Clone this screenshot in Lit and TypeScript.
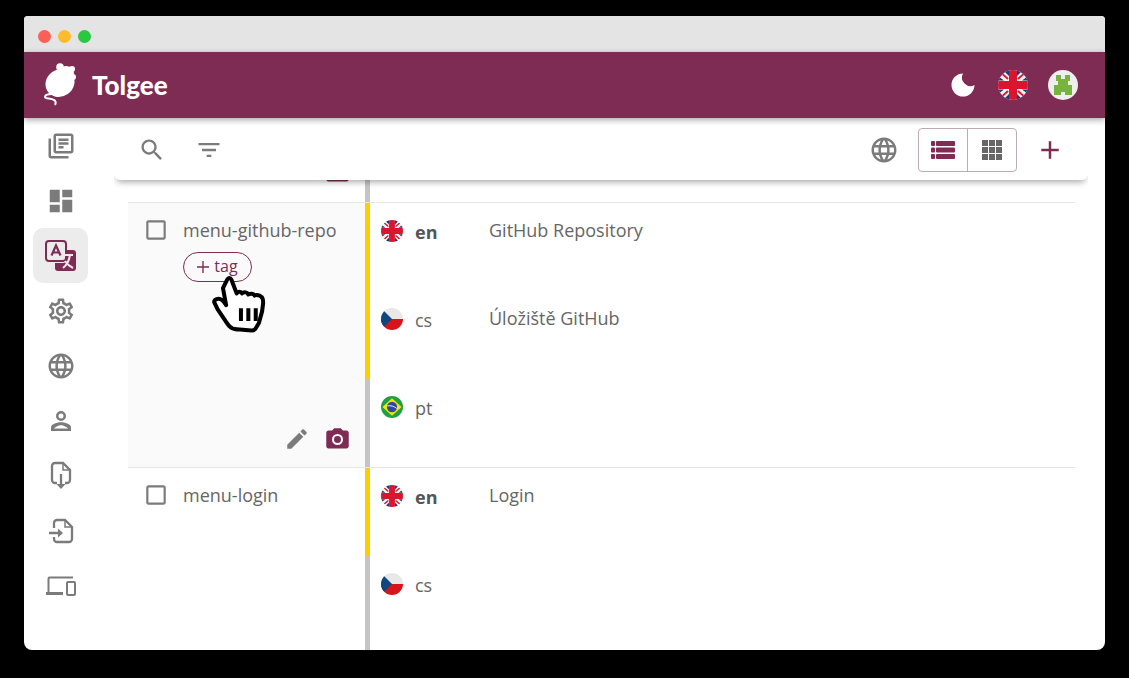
import { LitElement, html, css, svg } from "lit";
import { customElement } from "lit/decorators.js";

const P = {
  library:
    "M4 6H2v14c0 1.1.9 2 2 2h14v-2H4V6zm16-4H8c-1.1 0-2 .9-2 2v12c0 1.1.9 2 2 2h12c1.1 0 2-.9 2-2V4c0-1.1-.9-2-2-2zm0 14H8V4h12v12zM10 9h8v2h-8zm0 3h4v2h-4zm0-6h8v2h-8z",
  dashboard: "M3 13h8V3H3v10zm0 8h8v-6H3v6zm10 0h8V11h-8v10zm0-18v6h8V3h-8z",
  settings:
    "M19.43 12.98c.04-.32.07-.64.07-.98 0-.34-.03-.66-.07-.98l2.11-1.65c.19-.15.24-.42.12-.64l-2-3.46c-.09-.16-.26-.25-.44-.25-.06 0-.12.01-.17.03l-2.49 1c-.52-.4-1.08-.73-1.69-.98l-.38-2.65C14.46 2.18 14.25 2 14 2h-4c-.25 0-.46.18-.49.42l-.38 2.65c-.61.25-1.17.59-1.69.98l-2.49-1c-.06-.02-.12-.03-.18-.03-.17 0-.34.09-.43.25l-2 3.46c-.13.22-.07.49.12.64l2.11 1.65c-.04.32-.07.65-.07.98 0 .33.03.66.07.98l-2.11 1.65c-.19.15-.24.42-.12.64l2 3.46c.09.16.26.25.44.25.06 0 .12-.01.17-.03l2.49-1c.52.4 1.08.73 1.69.98l.38 2.65c.03.24.24.42.49.42h4c.25 0 .46-.18.49-.42l.38-2.65c.61-.25 1.17-.59 1.69-.98l2.49 1c.06.02.12.03.18.03.17 0 .34-.09.43-.25l2-3.46c.12-.22.07-.49-.12-.64l-2.11-1.65zm-1.98-1.71c.04.31.05.52.05.73 0 .21-.02.43-.05.73l-.14 1.13.89.7 1.08.84-.7 1.21-1.27-.51-1.04-.42-.9.68c-.43.32-.84.56-1.25.73l-1.06.43-.16 1.13-.2 1.35h-1.4l-.19-1.35-.16-1.13-1.06-.43c-.43-.18-.83-.41-1.23-.71l-.91-.7-1.06.43-1.27.51-.7-1.21 1.08-.84.89-.7-.14-1.13c-.03-.31-.05-.54-.05-.74s.02-.43.05-.73l.14-1.13-.89-.7-1.08-.84.7-1.21 1.27.51 1.04.42.9-.68c.43-.32.84-.56 1.25-.73l1.06-.43.16-1.13.2-1.35h1.39l.19 1.35.16 1.13 1.06.43c.43.18.83.41 1.23.71l.91.7 1.06-.43 1.27-.51.7 1.21-1.07.85-.89.7.14 1.13zM12 8c-2.21 0-4 1.79-4 4s1.79 4 4 4 4-1.79 4-4-1.79-4-4-4zm0 6c-1.1 0-2-.9-2-2s.9-2 2-2 2 .9 2 2-.9 2-2 2z",
  globe:
    "M11.99 2C6.47 2 2 6.48 2 12s4.47 10 9.99 10C17.52 22 22 17.52 22 12S17.52 2 11.99 2zm6.93 6h-2.95c-.32-1.25-.78-2.45-1.38-3.56 1.84.63 3.37 1.91 4.33 3.56zM12 4.04c.83 1.2 1.48 2.53 1.91 3.96h-3.82c.43-1.43 1.08-2.76 1.91-3.96zM4.26 14C4.1 13.36 4 12.69 4 12s.1-1.36.26-2h3.38c-.08.66-.14 1.32-.14 2 0 .68.06 1.34.14 2H4.26zm.82 2h2.95c.32 1.25.78 2.45 1.38 3.56-1.84-.63-3.37-1.9-4.33-3.56zm2.95-8H5.08c.96-1.66 2.49-2.93 4.33-3.56C8.81 5.55 8.35 6.75 8.03 8zM12 19.96c-.83-1.2-1.48-2.53-1.91-3.96h3.82c-.43 1.43-1.08 2.76-1.91 3.96zM14.34 14H9.66c-.09-.66-.16-1.32-.16-2 0-.68.07-1.35.16-2h4.68c.09.65.16 1.32.16 2 0 .68-.07 1.34-.16 2zm.25 5.56c.6-1.11 1.06-2.31 1.38-3.56h2.95c-.96 1.65-2.49 2.93-4.33 3.56zM16.36 14c.08-.66.14-1.32.14-2 0-.68-.06-1.34-.14-2h3.38c.16.64.26 1.31.26 2s-.1 1.36-.26 2h-3.38z",
  search:
    "M15.5 14h-.79l-.28-.27C15.41 12.59 16 11.11 16 9.5 16 5.91 13.09 3 9.5 3S3 5.91 3 9.5 5.91 16 9.5 16c1.61 0 3.09-.59 4.23-1.57l.27.28v.79l5 4.99L20.49 19l-4.99-5zm-6 0C7.01 14 5 11.99 5 9.5S7.01 5 9.5 5 14 7.01 14 9.5 11.99 14 9.5 14z",
  filter: "M10 18h4v-2h-4v2zM3 6v2h18V6H3zm3 7h12v-2H6v2z",
  plus: "M19 13h-6v6h-2v-6H5v-2h6V5h2v6h6v2z",
  edit: "M3 17.25V21h3.75L17.81 9.94l-3.75-3.75L3 17.25zM20.71 7.04c.39-.39.39-1.02 0-1.41l-2.34-2.34c-.39-.39-1.02-.39-1.41 0l-1.83 1.83 3.75 3.75 1.83-1.83z",
  check:
    "M19 5v14H5V5h14m0-2H5c-1.1 0-2 .9-2 2v14c0 1.1.9 2 2 2h14c1.1 0 2-.9 2-2V5c0-1.1-.9-2-2-2z",
  camera:
    "M9 2L7.17 4H4c-1.1 0-2 .9-2 2v12c0 1.1.9 2 2 2h16c1.1 0 2-.9 2-2V6c0-1.1-.9-2-2-2h-3.17L15 2H9z",
};

const GREY = "#7b7b7b";
const MAROON = "#7f2c54";

const icon = (d: string, size = 30, color = GREY) => html`<svg
  width=${size}
  height=${size}
  viewBox="0 0 24 24"
  fill=${color}
>
  <path d=${d}></path>
</svg>`;

const translateIcon = html`<svg width="34" height="34" viewBox="0 0 34 34">
  <rect x="2" y="2" width="20" height="20" rx="3" fill="#ececec" stroke=${MAROON} stroke-width="2"></rect>
  <path d="M7.5 16.5 12 6.5l4.5 10M9 13.5h6" fill="none" stroke=${MAROON} stroke-width="2.200"></path>
  <path d="M22 11h7a3 3 0 0 1 3 3v15a3 3 0 0 1-3 3H14a3 3 0 0 1-3-3v-5h8a3 3 0 0 0 3-3z" fill=${MAROON}></path>
  <path d="M19 16h10M26 16c-1 6-3 10-7 13M21 22c2 3 4 5 8 7" fill="none" stroke="#f1e6ec" stroke-width="2"></path>
</svg>`;

const personIcon = html`<svg width="30" height="30" viewBox="0 0 24 24" fill=${GREY}>
  <circle cx="12" cy="8" r="3" fill="none" stroke=${GREY} stroke-width="2"></circle>
  <path d="M4 20v-3c0-2.660 5.330-4 8-4s8 1.340 8 4v3z"></path>
  <path d="M6.300 18h11.400c-.8-1.200-3.600-2.700-5.700-2.700S7.100 16.800 6.300 18z" fill="#fff"></path>
</svg>`;

const importIcon = html`<svg width="30" height="34" viewBox="0 0 30 34" fill="none" stroke=${GREY} stroke-width="2.300">
  <path d="M11 24H9a3 3 0 0 1-3-3V7a3 3 0 0 1 3-3h8l7 7v10a3 3 0 0 1-3 3h-2"></path>
  <path d="M17 4v7h7" stroke-width="1.500"></path>
  <path d="M15 15v11"></path>
  <path d="M10.500 25h9L15 30z" fill=${GREY} stroke="none"></path>
</svg>`;

const exportIcon = html`<svg width="30" height="34" viewBox="0 0 30 34" fill="none" stroke=${GREY} stroke-width="2.300">
  <path d="M8 14V9a3 3 0 0 1 3-3h8l7 7v12a3 3 0 0 1-3 3H11a3 3 0 0 1-3-3v-2"></path>
  <path d="M19 6v7h7" stroke-width="1.500"></path>
  <path d="M3 19h10"></path>
  <path d="M12 14.500v9l5-4.500z" fill=${GREY} stroke="none"></path>
</svg>`;

const devicesIcon = html`<svg width="30" height="20" viewBox="0 0 30 20" fill="none">
  <path d="M2.5 16V2.500a1 1 0 0 1 1-1H27" stroke=${GREY} stroke-width="2"></path>
  <path d="M0 16h17v3H0z" fill=${GREY}></path>
  <rect x="21" y="6" width="8" height="13" rx="1" stroke=${GREY} stroke-width="2"></rect>
</svg>`;

const ukFlag = (size: number) => html`<svg width=${size} height=${size} viewBox="0 0 30 30">
  <defs>
    <clipPath id="uk"><circle cx="15" cy="15" r="15"></circle></clipPath>
  </defs>
  <g clip-path="url(#uk)">
    <rect width="30" height="30" fill="#f2f2f2"></rect>
    <path d="M5 0h6v6zM25 0h-6v6zM5 30h6v-6zM25 30h-6v-6zM0 6l6 4.500H0zM30 6l-6 4.500h6zM0 24l6-4.500H0zM30 24l-6-4.500h6z" fill="#1f3a7a"></path>
    <path d="M0 0l10 9M30 0L20 9M0 30l10-9M30 30L20 21" stroke="#d8172f" stroke-width="1.800"></path>
    <path d="M11 0h8v11h11v8H19v11h-8V19H0v-8h11z" fill="#d8172f"></path>
  </g>
</svg>`;

const csFlag = html`<svg width="22" height="22" viewBox="0 0 30 30">
  <defs>
    <clipPath id="cs"><circle cx="15" cy="15" r="15"></circle></clipPath>
  </defs>
  <g clip-path="url(#cs)">
    <rect width="30" height="15" fill="#e8e8e8"></rect>
    <rect y="15" width="30" height="15" fill="#d7141a"></rect>
    <path d="M0 0l15 15L0 30z" fill="#11457e"></path>
  </g>
</svg>`;

const ptFlag = html`<svg width="22" height="22" viewBox="0 0 30 30">
  <circle cx="15" cy="15" r="15" fill="#229e45"></circle>
  <path d="M15 3l13 12-13 12L2 15z" fill="#f8e509"></path>
  <circle cx="15" cy="15" r="7" fill="#2b49a3"></circle>
  <path d="M8.500 13.500c5-.8 9.500.5 13 3.500" fill="none" stroke="#fff" stroke-width="1.200"></path>
</svg>`;

const FLAGS: Record<string, unknown> = { en: ukFlag(22), cs: csFlag, pt: ptFlag };

const avatar = svg`
  <circle cx="15" cy="15" r="15" fill="#eeeeee"></circle>
  <path d="M8 5h5v4h4V5h5v6h-2v4h4v10h-7v-3h-4v3H6V15h4v-4H8z" fill="#78b340"></path>`;

const logo = html`<svg width="40" height="46" viewBox="0 0 40 46" fill="#fff">
  <ellipse cx="16" cy="21" rx="15" ry="13.500" transform="rotate(-35 16 21)"></ellipse>
  <ellipse cx="22" cy="11" rx="8" ry="7"></ellipse>
  <circle cx="16" cy="5" r="3.800"></circle>
  <circle cx="28" cy="7" r="3"></circle>
  <circle cx="29" cy="15" r="3"></circle>
  <path d="M8 32c-4 0-7 1-7 3 0 2 6 1 9 3 2 1 2 3 1 5" fill="none" stroke="#fff" stroke-width="2"></path>
</svg>`;

const hand = html`<svg width="74" height="74" viewBox="0 0 70 70">
  <path
    d="M21 12c1-2 3-2 4 0l5 13c1-2 4-2 5 0 2-2 5-1 6 1 2-1 5-1 6 1 2-1 5 0 6 1 2 1 2 3 2 6l-1 8-3 11-3 5c-1 2-2 2-4 2l-14-1c-3 0-5-1-7-3l-3-4-8-12-3-6c-1-2 1-4 4-4 3 0 5 3 7 6l-3-16z"
    fill="#fff"
    stroke="#000"
    stroke-width="3.800"
    stroke-linejoin="round"
  ></path>
  <path d="M34 39v12M41 39v12M48 39v12" stroke="#000" stroke-width="3.800"></path>
</svg>`;

const SIDE = [
  icon(P.library),
  icon(P.dashboard),
  translateIcon,
  icon(P.settings),
  icon(P.globe),
  personIcon,
  importIcon,
  exportIcon,
  devicesIcon,
];

type Tr = { lang: string; text: string; filled: boolean };
type Row = { name: string; hovered: boolean; trs: Tr[] };

const ROWS: Row[] = [
  {
    name: "menu-github-repo",
    hovered: true,
    trs: [
      { lang: "en", text: "GitHub Repository", filled: true },
      { lang: "cs", text: "Úložiště GitHub", filled: true },
      { lang: "pt", text: "", filled: false },
    ],
  },
  {
    name: "menu-login",
    hovered: false,
    trs: [
      { lang: "en", text: "Login", filled: true },
      { lang: "cs", text: "", filled: false },
    ],
  },
];

@customElement("app-root")
export class AppRoot extends LitElement {
  static styles = css`
    :host {
      display: block;
      width: 1129px;
      height: 678px;
      background: #000;
      padding: 16px 24px 28px;
      box-sizing: border-box;
      font-family: "Open Sans", "Liberation Sans", sans-serif;
      overflow: hidden;
    }
    .window {
      position: relative;
      height: 634px;
      background: #fff;
      border-radius: 4px 4px 8px 8px;
      overflow: hidden;
      display: flex;
      flex-direction: column;
    }
    .titlebar {
      height: 36px;
      flex: none;
      background: #e4e4e4;
      display: flex;
      align-items: center;
      gap: 7px;
      padding: 5px 0 0 14px;
      box-sizing: border-box;
    }
    .dot {
      width: 13px;
      height: 13px;
      border-radius: 50%;
    }
    .header {
      position: relative;
      z-index: 3;
      height: 66px;
      flex: none;
      background: #7f2c54;
      box-shadow: 0 2px 6px rgba(0, 0, 0, 0.35);
      display: flex;
      align-items: center;
      padding: 0 27px 0 20px;
    }
    .brand {
      color: #fff;
      font-family: "Lato", sans-serif;
      font-weight: 900;
      font-size: 26px;
      margin-left: 8px;
      flex: 1;
    }
    .head-icons {
      display: flex;
      align-items: center;
      gap: 20px;
    }
    .head-icons svg {
      display: block;
    }
    .body {
      flex: 1;
      min-height: 0;
      display: flex;
    }
    .side {
      width: 104px;
      flex: none;
      padding: 0 0 0 9px;
      box-sizing: border-box;
    }
    .side-item {
      width: 55px;
      height: 55px;
      display: flex;
      align-items: center;
      justify-content: center;
      border-radius: 10px;
    }
    .side-item.active {
      background: #ececec;
    }
    .main {
      flex: 1;
      min-width: 0;
      padding-right: 30px;
      display: flex;
      flex-direction: column;
    }
    .toolbar {
      position: relative;
      z-index: 2;
      height: 62px;
      flex: none;
      box-sizing: border-box;
      margin: 0 -13px 0 -14px;
      background: #fff;
      border-radius: 0 0 6px 6px;
      box-shadow: 0 5px 6px -3px rgba(0, 0, 0, 0.35);
      clip-path: inset(0 0 -12px 0);
      display: flex;
      align-items: center;
      padding: 2px 23px 0 24px;
    }
    .tool-left {
      display: flex;
      gap: 29px;
      flex: 1;
    }
    .toolbar svg {
      display: block;
    }
    .switch {
      display: flex;
      height: 44px;
      margin: 0 18px 0 19px;
      border: 1px solid #bfa9b4;
      border-radius: 4px;
      box-sizing: border-box;
    }
    .switch div {
      width: 48px;
      display: flex;
      align-items: center;
      justify-content: center;
    }
    .switch div + div {
      width: 49px;
      border-left: 1px solid #bfa9b4;
      box-sizing: border-box;
    }
    .partial {
      height: 22px;
      flex: none;
      display: flex;
      overflow: hidden;
    }
    .partial .left {
      width: 237px;
      flex: none;
      display: flex;
      justify-content: flex-end;
      padding-right: 14px;
      box-sizing: border-box;
      align-items: flex-end;
    }
    .partial .left svg {
      display: block;
      margin-bottom: 16px;
    }
    .partial .right {
      flex: 1;
      border-left: 5px solid #c4c4c4;
    }
    .row {
      display: flex;
      border-top: 1px solid #e6e6e6;
    }
    .key {
      width: 237px;
      flex: none;
      box-sizing: border-box;
      padding: 14px 0 0 15px;
      position: relative;
      display: flex;
      align-items: flex-start;
      color: #666;
    }
    .key.hover {
      background: #fafafa;
    }
    .key svg {
      display: block;
    }
    .key-body {
      margin-left: 14px;
    }
    .key-name {
      font-size: 18px;
      line-height: 27px;
      white-space: nowrap;
    }
    .tag {
      margin-top: 8px;
      width: 69px;
      height: 30px;
      padding-bottom: 3px;
      box-sizing: border-box;
      border: 1px solid #7f2c54;
      border-radius: 15px;
      color: #7f2c54;
      font-size: 16px;
      display: flex;
      align-items: center;
      justify-content: center;
      gap: 5px;
    }
    .tag svg {
      flex: none;
      margin-top: 3px;
    }
    .key-actions {
      position: absolute;
      right: 14px;
      bottom: 14px;
      display: flex;
      gap: 14px;
    }
    .trs {
      flex: 1;
      min-width: 0;
    }
    .tr {
      height: 88px;
      box-sizing: border-box;
      border-left: 5px solid #c4c4c4;
      display: flex;
      padding: 17px 0 0 11px;
      color: #666;
      font-size: 18px;
      line-height: 22px;
    }
    .tr.filled {
      border-left-color: #ffce00;
    }
    .tr svg {
      display: block;
      flex: none;
    }
    .lang {
      margin-left: 12px;
      width: 74px;
      flex: none;
      padding-top: 1px;
    }
    .lang.base {
      font-weight: 700;
      color: #555;
    }
    .tr-text {
      margin-top: -1px;
    }
    .list {
      flex: 1;
      min-height: 0;
      display: flex;
      flex-direction: column;
      overflow: hidden;
    }
    .row:last-child,
    .row:last-child .trs {
      flex: 1;
    }
    .row:last-child .trs {
      display: flex;
      flex-direction: column;
    }
    .row:last-child .tr:last-child {
      flex: 1;
    }
    .cursor {
      position: absolute;
      left: 181px;
      top: 251px;
      z-index: 4;
    }
  `;

  render() {
    return html`
      <div class="window">
        <div class="titlebar">
          <div class="dot" style="background:#fc5f57"></div>
          <div class="dot" style="background:#fdbc2e"></div>
          <div class="dot" style="background:#28c840"></div>
        </div>
        <div class="header">
          ${logo}
          <div class="brand">Tolgee</div>
          <div class="head-icons">
            <svg width="30" height="30" viewBox="0 0 30 30">
              <path d="M15 3.500A11.500 11.500 0 1 0 26.500 15 8.500 8.500 0 0 1 15 3.500z" fill="#fff"></path>
            </svg>
            ${ukFlag(30)}
            <svg width="30" height="30" viewBox="0 0 30 30">${avatar}</svg>
          </div>
        </div>
        <div class="body">
          <div class="side">
            ${SIDE.map(
              (ic, i) =>
                html`<div class="side-item ${i === 2 ? "active" : ""}">${ic}</div>`
            )}
          </div>
          <div class="main">
            <div class="toolbar">
              <div class="tool-left">${icon(P.search, 28)} ${icon(P.filter, 28)}</div>
              ${icon(P.globe, 30)}
              <div class="switch">
                <div>
                  <svg width="24" height="20" viewBox="0 0 24 20" fill=${MAROON}>
                    <rect x="0" y="1" width="4" height="5" rx="1"></rect>
                    <rect x="0" y="7.500" width="4" height="5" rx="1"></rect>
                    <rect x="0" y="14" width="4" height="5" rx="1"></rect>
                    <rect x="5" y="1" width="19" height="5" rx="1"></rect>
                    <rect x="5" y="7.500" width="19" height="5" rx="1"></rect>
                    <rect x="5" y="14" width="19" height="5" rx="1"></rect>
                  </svg>
                </div>
                <div>
                  <svg width="20" height="20" viewBox="0 0 20 20" fill="#666">
                    ${[0, 7, 14].map((y) =>
                      [0, 7, 14].map(
                        (x) => svg`<rect x=${x} y=${y} width="6" height="6"></rect>`
                      )
                    )}
                  </svg>
                </div>
              </div>
              ${icon(P.plus, 30, MAROON)}
            </div>
            <div class="partial">
              <div class="left">${this.cameraIcon()}</div>
              <div class="right"></div>
            </div>
            <div class="list">${ROWS.map((r) => this.renderRow(r))}</div>
          </div>
        </div>
        <div class="cursor">${hand}</div>
      </div>
    `;
  }

  cameraIcon() {
    return html`<svg width="27" height="27" viewBox="0 0 24 24">
      <path d=${P.camera} fill=${MAROON}></path>
      <circle cx="12" cy="12" r="4" fill="none" stroke="#fff" stroke-width="1.800"></circle>
    </svg>`;
  }

  renderRow(r: Row) {
    return html`<div class="row">
      <div class="key ${r.hovered ? "hover" : ""}">
        ${icon(P.check, 26, GREY)}
        <div class="key-body">
          <div class="key-name">${r.name}</div>
          ${r.hovered
            ? html`<div class="tag">
                <svg width="12" height="12" viewBox="0 0 12 12" fill="#7f2c54">
                  <path d="M5.300 0h1.400v5.300H12v1.400H6.700V12H5.300V6.700H0V5.300h5.300z"></path>
                </svg>
                tag
              </div>`
            : ""}
        </div>
        ${r.hovered
          ? html`<div class="key-actions">${icon(P.edit, 26, GREY)} ${this.cameraIcon()}</div>`
          : ""}
      </div>
      <div class="trs">
        ${r.trs.map(
          (t) => html`<div class="tr ${t.filled ? "filled" : ""}">
            ${FLAGS[t.lang]}
            <div class="lang ${t.lang === "en" ? "base" : ""}">${t.lang}</div>
            <div class="tr-text">${t.text}</div>
          </div>`
        )}
      </div>
    </div>`;
  }
}
